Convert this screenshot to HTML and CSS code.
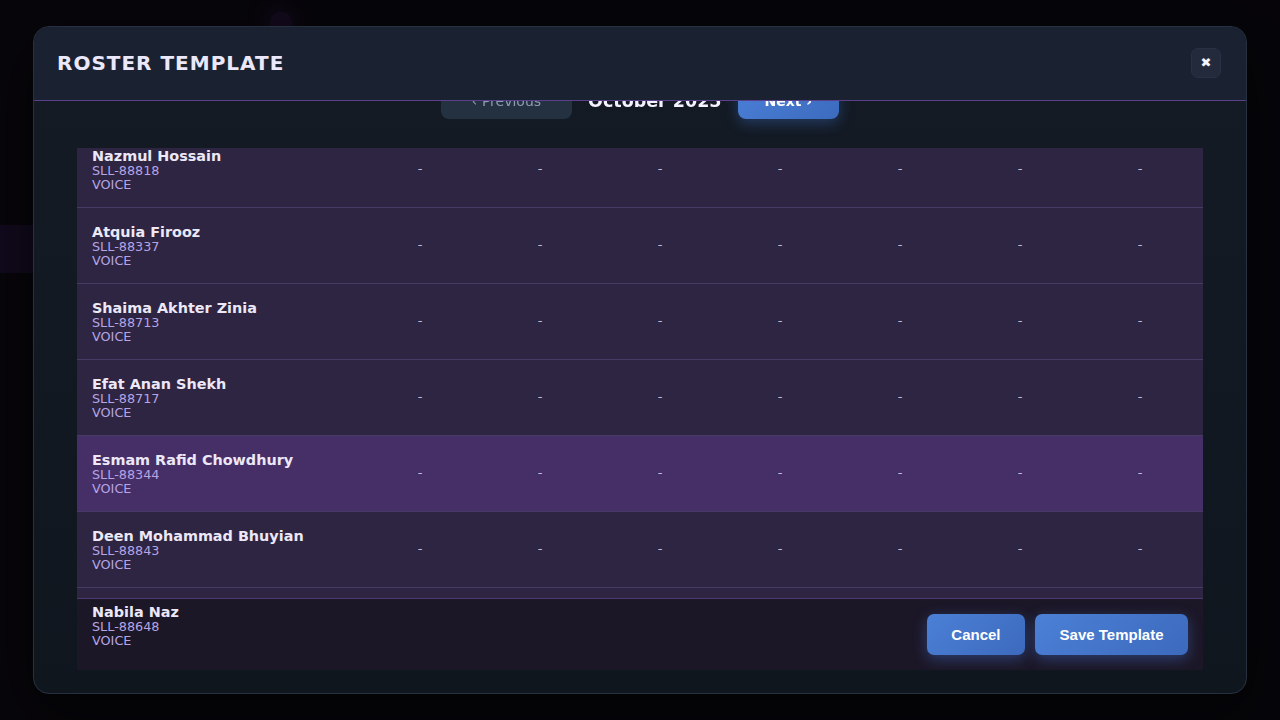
FILE: index.html
```html
<!DOCTYPE html>
<html lang="en">
<head>
<meta charset="utf-8">
<title>Roster Template</title>
<link rel="stylesheet" href="styles.css">
</head>
<body>
<div class="app">
  <aside class="sidebar">
    <div class="brand"><span class="brand-dot"></span></div>
    <div class="nav-item"></div>
    <div class="nav-item"></div>
    <div class="nav-item active"></div>
    <div class="nav-item"></div>
    <div class="nav-item"></div>
  </aside>
  <main class="main"></main>
</div>

<div class="overlay">
  <section class="modal">
    <header class="modal-header">
      <h2 class="modal-title">ROSTER TEMPLATE</h2>
      <button class="close-btn" aria-label="Close">✖</button>
    </header>

    <div class="modal-body">
      <div class="month-nav">
        <button class="btn-prev">‹ Previous</button>
        <span class="month-label">October 2025</span>
        <button class="btn-next">Next ›</button>
      </div>

      <div class="roster">
        <div class="rows">
          <div class="row">
            <div class="agent"><div class="agent-name">Nazmul Hossain</div><div class="agent-meta">SLL-88818</div><div class="agent-meta">VOICE</div></div>
            <div class="day">-</div><div class="day">-</div><div class="day">-</div><div class="day">-</div><div class="day">-</div><div class="day">-</div><div class="day">-</div>
          </div>
          <div class="row">
            <div class="agent"><div class="agent-name">Atquia Firooz</div><div class="agent-meta">SLL-88337</div><div class="agent-meta">VOICE</div></div>
            <div class="day">-</div><div class="day">-</div><div class="day">-</div><div class="day">-</div><div class="day">-</div><div class="day">-</div><div class="day">-</div>
          </div>
          <div class="row">
            <div class="agent"><div class="agent-name">Shaima Akhter Zinia</div><div class="agent-meta">SLL-88713</div><div class="agent-meta">VOICE</div></div>
            <div class="day">-</div><div class="day">-</div><div class="day">-</div><div class="day">-</div><div class="day">-</div><div class="day">-</div><div class="day">-</div>
          </div>
          <div class="row">
            <div class="agent"><div class="agent-name">Efat Anan Shekh</div><div class="agent-meta">SLL-88717</div><div class="agent-meta">VOICE</div></div>
            <div class="day">-</div><div class="day">-</div><div class="day">-</div><div class="day">-</div><div class="day">-</div><div class="day">-</div><div class="day">-</div>
          </div>
          <div class="row selected">
            <div class="agent"><div class="agent-name">Esmam Rafid Chowdhury</div><div class="agent-meta">SLL-88344</div><div class="agent-meta">VOICE</div></div>
            <div class="day">-</div><div class="day">-</div><div class="day">-</div><div class="day">-</div><div class="day">-</div><div class="day">-</div><div class="day">-</div>
          </div>
          <div class="row">
            <div class="agent"><div class="agent-name">Deen Mohammad Bhuyian</div><div class="agent-meta">SLL-88843</div><div class="agent-meta">VOICE</div></div>
            <div class="day">-</div><div class="day">-</div><div class="day">-</div><div class="day">-</div><div class="day">-</div><div class="day">-</div><div class="day">-</div>
          </div>
          <div class="row">
            <div class="agent"><div class="agent-name">Nabila Naz</div><div class="agent-meta">SLL-88648</div><div class="agent-meta">VOICE</div></div>
            <div class="day">-</div><div class="day">-</div><div class="day">-</div><div class="day">-</div><div class="day">-</div><div class="day">-</div><div class="day">-</div>
          </div>
        </div>

        <footer class="roster-footer">
          <button class="btn-primary">Cancel</button>
          <button class="btn-primary">Save Template</button>
        </footer>
      </div>
    </div>
  </section>
</div>
</body>
</html>
```

FILE: styles.css
```css
* { box-sizing: border-box; }

html, body {
  margin: 0;
  padding: 0;
  width: 1280px;
  height: 720px;
  overflow: hidden;
  background: #0c0b11;
  font-family: "DejaVu Sans", sans-serif;
}

/* background app (dimmed) */
.app {
  display: flex;
  width: 1280px;
  height: 720px;
}
.sidebar {
  position: relative;
  z-index: 1;
  width: 284px;
  display: flex;
  flex-direction: column;
  background: #0e0c14;
}
.brand {
  height: 51px;
  display: flex;
  justify-content: flex-end;
  align-items: center;
}
.brand-dot {
  width: 22px;
  height: 22px;
  border-radius: 50%;
  background: #4c2478;
  box-shadow: 0 0 16px 6px rgba(100, 45, 160, 0.5);
  margin-right: -8px;
  margin-top: -6px;
}
.nav-item {
  height: 48px;
  margin-top: 26px;
}
.nav-item.active {
  background: linear-gradient(90deg, #4a2380 0%, rgba(74, 35, 128, 0.2) 60%, transparent 100%);
}
.main {
  flex: 1;
  background: #0b0a0f;
}

.overlay {
  position: fixed;
  inset: 0;
  z-index: 10;
  background: rgba(6, 5, 9, 0.82);
  display: flex;
  align-items: center;
  justify-content: center;
}

/* modal */
.modal {
  width: 1214px;
  height: 668px;
  border: 1px solid #283141;
  border-radius: 16px;
  background: linear-gradient(180deg, #141b25 0%, #0f161e 100%);
  display: flex;
  flex-direction: column;
  overflow: hidden;
  box-shadow: 0 20px 60px rgba(0, 0, 0, 0.6);
}

.modal-header {
  position: relative;
  z-index: 5;
  height: 74px;
  flex-shrink: 0;
  display: flex;
  align-items: center;
  justify-content: space-between;
  padding: 0 25px 2px 23px;
  background: #1a2232;
  border-bottom: 1px solid #5a3f8c;
}
.modal-title {
  margin: 0;
  font-size: 20px;
  font-weight: bold;
  letter-spacing: 1px;
  color: #ebe8fb;
}
.close-btn {
  width: 30px;
  height: 30px;
  border-radius: 7px;
  border: 1px solid #2a3144;
  background: #232a3c;
  color: #f2f4ff;
  font-size: 13px;
  line-height: 1;
  display: flex;
  align-items: center;
  justify-content: center;
  padding: 0;
  font-family: "DejaVu Sans", sans-serif;
}

.modal-body {
  flex: 1;
  display: flex;
  flex-direction: column;
  padding: 0 43px 23px;
  min-height: 0;
}

.month-nav {
  margin-top: -18px;
  height: 36px;
  display: flex;
  align-items: center;
  justify-content: center;
  gap: 16px;
  flex-shrink: 0;
}
.btn-prev {
  height: 36px;
  padding: 0 31px;
  border: none;
  border-radius: 8px;
  background: #243140;
  color: #8e9cb2;
  font-family: "DejaVu Sans", sans-serif;
  font-size: 14px;
}
.month-label {
  color: #f4f2ff;
  font-size: 17.5px;
  font-weight: bold;
}
.btn-next {
  height: 36px;
  padding: 0 27px;
  border: none;
  border-radius: 8px;
  background: linear-gradient(135deg, #4a7fd6, #3c6bbe);
  color: #ffffff;
  font-family: "DejaVu Sans", sans-serif;
  font-weight: bold;
  font-size: 14px;
  box-shadow: 0 4px 14px rgba(70, 120, 220, 0.35);
}

/* roster table */
.roster {
  position: relative;
  margin-top: 29px;
  height: 522px;
  overflow: hidden;
  background: #2c2440;
}
.rows {
  margin-top: -16px;
}
.row {
  display: flex;
  height: 76px;
  background: #2d2541;
  border-bottom: 1px solid #473b66;
}
.row.selected {
  background: #462e66;
}
.agent {
  position: relative;
  z-index: 3;
  width: 283px;
  flex-shrink: 0;
  padding: 16px 0 0 15px;
}
.agent-name {
  font-size: 14.4px;
  line-height: 16px;
  font-weight: bold;
  color: #ece8f8;
  white-space: nowrap;
}
.agent-meta {
  font-size: 12.8px;
  line-height: 14.3px;
  color: #b5a4e6;
}
.day {
  width: 120px;
  flex-shrink: 0;
  display: flex;
  align-items: center;
  justify-content: center;
  padding-bottom: 2px;
  color: #c4bcd8;
  font-size: 13px;
}

.roster-footer {
  position: absolute;
  left: 0;
  right: 0;
  bottom: 0;
  z-index: 2;
  height: 72px;
  background: #1c1727;
  border-top: 1px solid #4d3b70;
  display: flex;
  align-items: center;
  justify-content: flex-end;
  gap: 10px;
  padding: 0 15px;
}
.btn-primary {
  height: 41px;
  padding: 0 24.5px;
  border: none;
  border-radius: 7px;
  background: linear-gradient(135deg, #4b80d6, #3c6abd);
  color: #ffffff;
  font-family: "Liberation Sans", Arial, sans-serif;
  font-weight: bold;
  font-size: 15px;
  box-shadow: 0 4px 14px rgba(70, 120, 220, 0.4);
}
```
